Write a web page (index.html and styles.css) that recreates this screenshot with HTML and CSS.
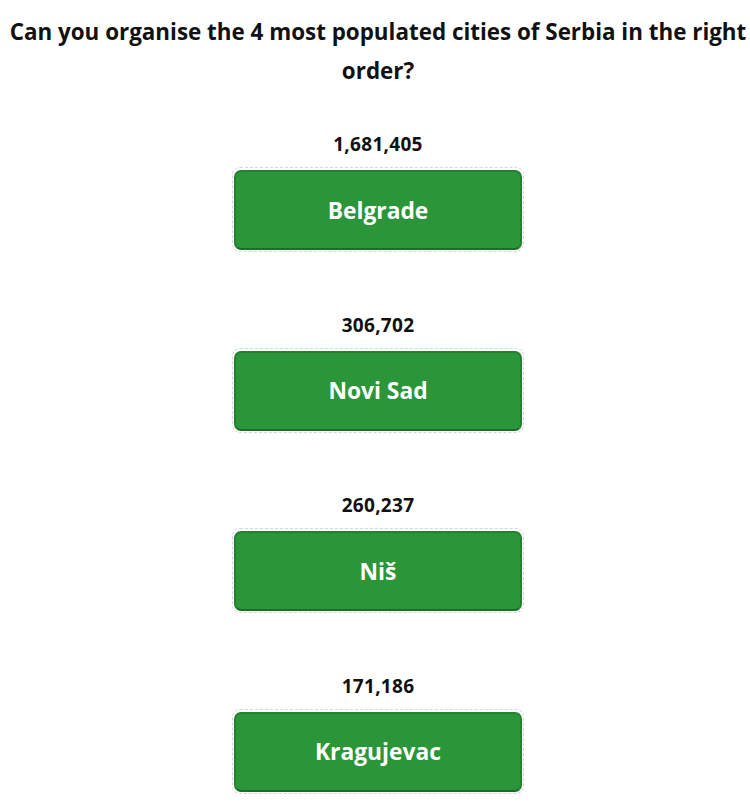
FILE: index.html
```html
<!DOCTYPE html>
<html>
<head>
<meta charset="utf-8">
<link rel="stylesheet" href="styles.css">
</head>
<body>
<h2 class="title">Can you organise the 4 most populated cities of Serbia in the right order?</h2>
<div class="list">
  <div class="item">
    <div class="count">1,681,405</div>
    <div class="slot"><div class="city">Belgrade</div></div>
  </div>
  <div class="item">
    <div class="count">306,702</div>
    <div class="slot"><div class="city">Novi Sad</div></div>
  </div>
  <div class="item">
    <div class="count">260,237</div>
    <div class="slot"><div class="city">Niš</div></div>
  </div>
  <div class="item">
    <div class="count">171,186</div>
    <div class="slot"><div class="city">Kragujevac</div></div>
  </div>
</div>
</body>
</html>
```
FILE: styles.css
```css
html, body {
  margin: 0;
  padding: 0;
  background: #ffffff;
}
body {
  font-family: "Open Sans", "Noto Sans", sans-serif;
  color: #111111;
  padding: 0 0 0 6px;
}
.title {
  margin: 0;
  padding-top: 12px;
  font-size: 22.4px;
  line-height: 39px;
  font-weight: 700;
  text-align: center;
}
.list {
  display: flex;
  flex-direction: column;
  align-items: center;
  gap: 60.5px;
  margin-top: 42px;
}
.item {
  display: flex;
  flex-direction: column;
  align-items: center;
}
.count {
  font-size: 19px;
  font-weight: 700;
  line-height: 24px;
  margin-bottom: 11px;
  letter-spacing: 0.3px;
}
.slot {
  border: 1px dashed #d3d8d3;
  border-radius: 8px;
  padding: 2px 1px 1px 1px;
}
.city {
  width: 284px;
  height: 76px;
  box-sizing: content-box;
  display: flex;
  align-items: center;
  justify-content: center;
  background: #2a9539;
  border: 2px solid #23822f;
  border-bottom-color: #1c6d28;
  border-radius: 7px;
  color: #ffffff;
  font-size: 22.8px;
  font-weight: 700;
}
```
